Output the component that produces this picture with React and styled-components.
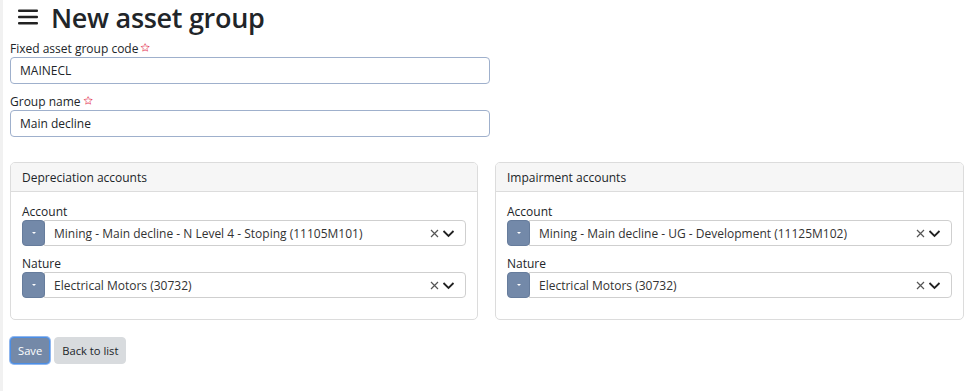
import React from "react";
import styled, { createGlobalStyle } from "styled-components";

const Global = createGlobalStyle`
  html, body { margin: 0; padding: 0; background: #fff; }
  body {
    font-family: "Open Sans", "Noto Sans", sans-serif;
    color: #212529;
  }
  * { box-sizing: border-box; }
`;

const Page = styled.div`
  width: 975px;
  height: 391px;
  border-left: 3px solid #f1f1f1;
  padding: 0 12px 0 7px;
  overflow: hidden;
`;

const TitleRow = styled.div`
  display: flex;
  align-items: center;
  gap: 12px;
  height: 34px;
  padding-left: 8px;
`;

const Title = styled.h1`
  margin: 0;
  font-size: 27px;
  font-weight: 600;
  letter-spacing: -0.3px;
  line-height: 1;
`;

const Field = styled.div`
  display: flex;
  flex-direction: column;
  width: ${(p) => p.$width || "auto"};
  margin-top: ${(p) => p.$mt || 0}px;
`;

const Label = styled.label`
  font-size: 12px;
  line-height: 16px;
  height: 16px;
`;

const Req = styled.span`
  color: #e3344f;
  font-size: 10px;
  font-weight: 700;
  vertical-align: top;
  margin-left: 3px;
  line-height: 12px;
`;

const TextInput = styled.div`
  height: 27px;
  border: 1px solid #9fb0cc;
  border-radius: 4px;
  padding: 0 9px;
  display: flex;
  align-items: center;
  font-size: 12px;
`;

const Panels = styled.div`
  display: grid;
  grid-template-columns: 468px 469px;
  gap: 17px;
  margin-top: 25px;
`;

const Panel = styled.div`
  border: 1px solid #dcdcdc;
  border-radius: 5px;
  height: 158px;
  overflow: hidden;
`;

const PanelHeader = styled.div`
  background: #f6f6f6;
  border-bottom: 1px solid #dcdcdc;
  height: 29px;
  padding: 0 11px;
  display: flex;
  align-items: center;
  font-size: 12px;
`;

const PanelBody = styled.div`
  padding: 12px 11px;
  display: flex;
  flex-direction: column;
  gap: 10px;
`;

const SelectRow = styled.div`
  display: flex;
  height: 26px;
`;

const AddonBtn = styled.div`
  width: 23px;
  background: #7389a9;
  border: 1px solid #667c9c;
  border-radius: 4px;
  display: flex;
  align-items: center;
  justify-content: center;
  margin-right: -1px;
  z-index: 1;
`;

const Caret = styled.span`
  width: 0;
  height: 0;
  border-left: 2.5px solid transparent;
  border-right: 2.5px solid transparent;
  border-top: 2.5px solid #fff;
`;

const SelectBox = styled.div`
  flex: 1;
  border: 1px solid #cfcfcf;
  border-radius: 0 4px 4px 0;
  display: flex;
  align-items: center;
  padding: 0 10px 0 9px;
  font-size: 12px;
  color: #333;
`;

const SelectValue = styled.span`
  flex: 1;
`;

const Icons = styled.span`
  display: flex;
  align-items: center;
  gap: 3px;
`;

const Actions = styled.div`
  display: flex;
  gap: 4px;
  margin-top: 17px;
`;

const Button = styled.button`
  font-family: inherit;
  font-size: 11.2px;
  height: 27px;
  padding: 0 7px;
  border-radius: 4px;
  cursor: pointer;
  background: ${(p) => (p.$primary ? "#7489a8" : "#d8dbde")};
  color: ${(p) => (p.$primary ? "#fff" : "#212529")};
  border: 1px solid ${(p) => (p.$primary ? "#4a8ee6" : "#d8dbde")};
  box-shadow: ${(p) => (p.$primary ? "0 0 0 1px #8fb6ee" : "none")};
`;

const Hamburger = () => (
  <svg width="21" height="16" viewBox="0 0 21 16">
    <rect x="0" y="0.5" width="20" height="2.6" rx="1" fill="#222" />
    <rect x="0" y="6.7" width="20" height="2.6" rx="1" fill="#222" />
    <rect x="0" y="12.9" width="20" height="2.6" rx="1" fill="#222" />
  </svg>
);

const ClearX = () => (
  <svg width="9" height="9" viewBox="0 0 9 9">
    <path d="M1 1 L8 8 M8 1 L1 8" stroke="#555" strokeWidth="1.2" />
  </svg>
);

const Chevron = () => (
  <svg width="13" height="9" viewBox="0 0 13 9">
    <path d="M1.5 2 L6.5 7 L11.5 2" stroke="#222" strokeWidth="1.8" fill="none" />
  </svg>
);

const Select = ({ value }) => (
  <SelectRow>
    <AddonBtn>
      <Caret />
    </AddonBtn>
    <SelectBox>
      <SelectValue>{value}</SelectValue>
      <Icons>
        <ClearX />
        <Chevron />
      </Icons>
    </SelectBox>
  </SelectRow>
);

const AccountPanel = ({ title, account, nature }) => (
  <Panel>
    <PanelHeader>{title}</PanelHeader>
    <PanelBody>
      <Field>
        <Label>Account</Label>
        <Select value={account} />
      </Field>
      <Field>
        <Label>Nature</Label>
        <Select value={nature} />
      </Field>
    </PanelBody>
  </Panel>
);

export default function App() {
  return (
    <>
      <Global />
      <Page>
        <TitleRow>
          <Hamburger />
          <Title>New asset group</Title>
        </TitleRow>
        <Field $width="480px" $mt={7}>
          <Label>
            Fixed asset group code<Req>✩</Req>
          </Label>
          <TextInput>MAINECL</TextInput>
        </Field>
        <Field $width="480px" $mt={10}>
          <Label>
            Group name<Req>✩</Req>
          </Label>
          <TextInput>Main decline</TextInput>
        </Field>
        <Panels>
          <AccountPanel
            title="Depreciation accounts"
            account="Mining - Main decline - N Level 4 - Stoping (11105M101)"
            nature="Electrical Motors (30732)"
          />
          <AccountPanel
            title="Impairment accounts"
            account="Mining - Main decline - UG - Development (11125M102)"
            nature="Electrical Motors (30732)"
          />
        </Panels>
        <Actions>
          <Button $primary>Save</Button>
          <Button>Back to list</Button>
        </Actions>
      </Page>
    </>
  );
}
